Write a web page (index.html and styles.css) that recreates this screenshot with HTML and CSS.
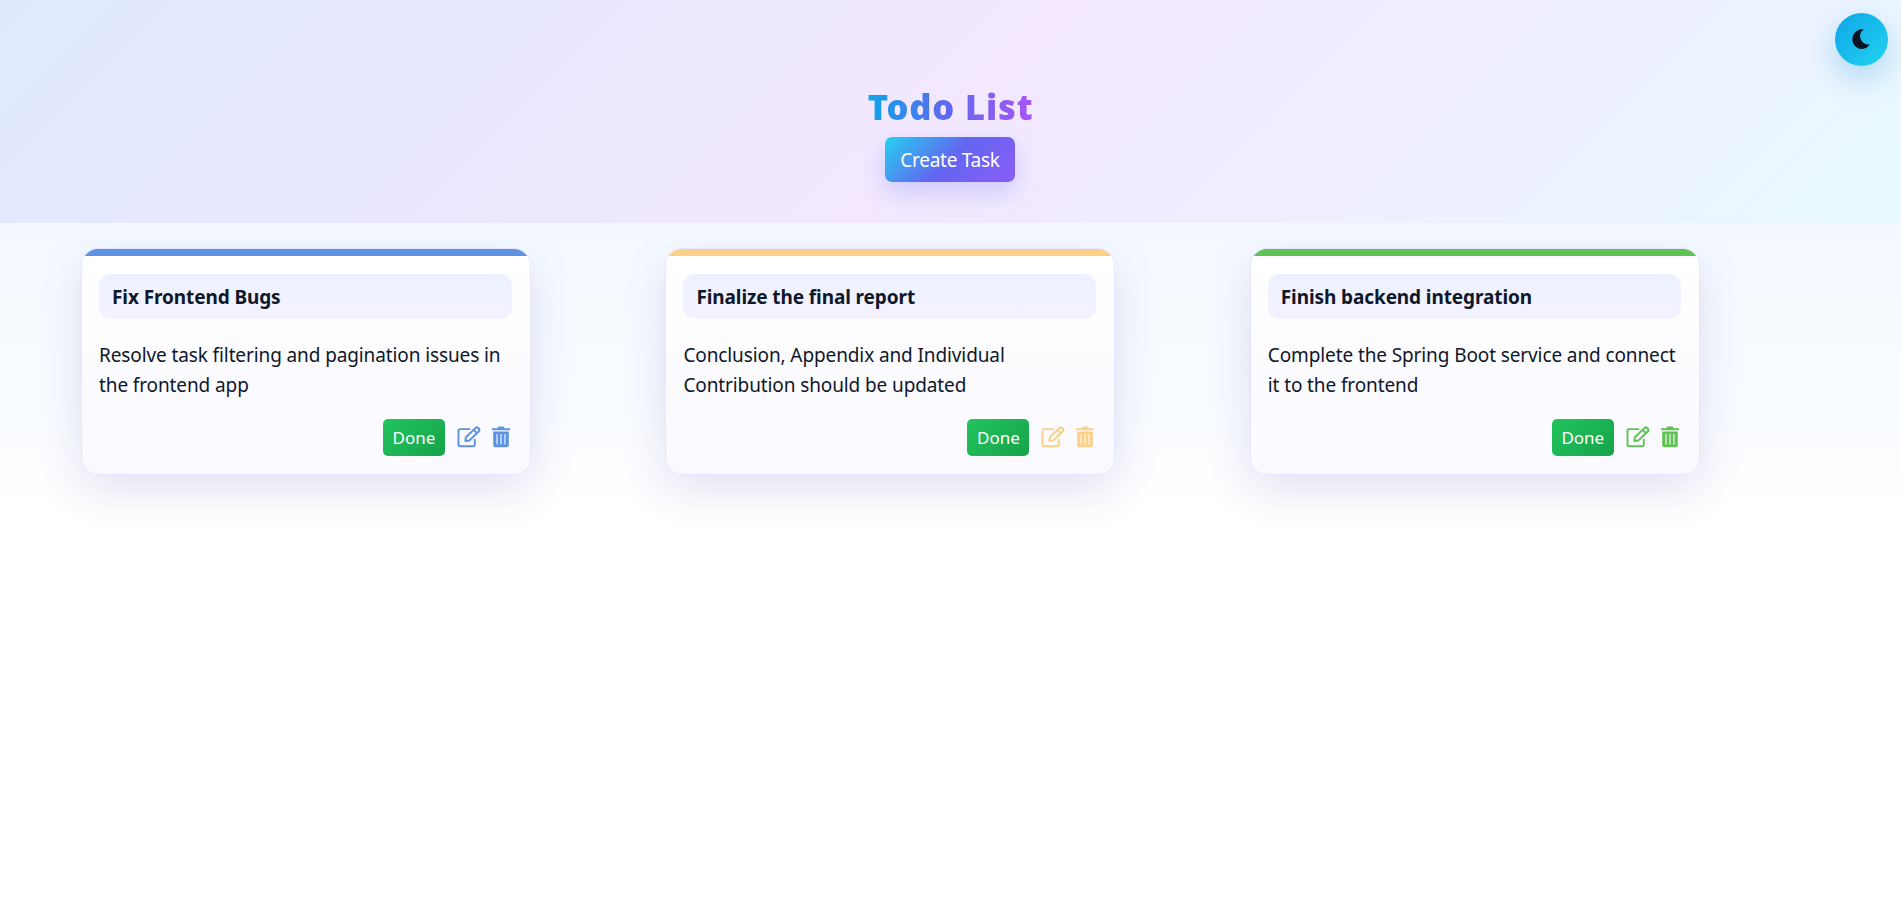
FILE: index.html
```html
<!DOCTYPE html>
<html lang="en">
<head>
<meta charset="utf-8">
<title>Todo List</title>
<link rel="stylesheet" href="styles.css">
</head>
<body>
<svg class="sprite" aria-hidden="true">
  <symbol id="edit" viewBox="0 0 24 22">
    <path d="M13.2 3.1H3.1Q1.5 3.1 1.5 4.7V18.6Q1.5 20.2 3.1 20.2H16.2Q17.8 20.2 17.8 18.6V13" fill="none" stroke="currentColor" stroke-width="1.9"/>
    <path d="M8.4 14.9 8.9 11.2 18.6 1.9Q19.9 .8 21.2 2L21.9 2.7Q23 4 21.9 5.2L12.3 14.6Z M16.6 3.9 19.9 7.1" fill="none" stroke="currentColor" stroke-width="2" stroke-linejoin="round"/>
  </symbol>
  <symbol id="trash" viewBox="0 0 18 22">
    <path d="M0 2.2H5.2L6.4.5H11.6L12.8 2.2H18V4.2H0Z" fill="currentColor"/>
    <path fill-rule="evenodd" d="M1.2 5.4H16.8V19.2Q16.8 21.3 14.7 21.3H3.3Q1.2 21.3 1.2 19.2ZM4.5 8V18.6H5.6V8ZM8.5 8V18.6H9.6V8ZM12.4 8V18.6H13.5V8Z" fill="currentColor"/>
  </symbol>
</svg>
<header class="hero">
  <h1 class="hero-title">Todo List</h1>
  <button class="create">Create Task</button>
  <button class="theme" aria-label="Toggle theme">
    <svg class="moon" viewBox="0 0 18 20"><path d="M11.8.4C9.2 1.8 7.9 4.3 8.1 7.2 8.4 12.2 12.3 15.9 17.8 15.6 16.1 18.3 13.2 19.9 10 19.9 4.6 19.9.4 15.600.4 10.200.4 4.800 4.500.400 9.800.2 10.500.2 11.300.2 11.800.4Z"/></svg>
  </button>
</header>
<main class="board">
  <article class="card blue">
    <h2 class="card-title">Fix Frontend Bugs</h2>
    <p class="card-text">Resolve task filtering and pagination issues in<br>the frontend app</p>
    <div class="actions"><button class="done">Done</button><svg class="edit"><use href="#edit"/></svg><svg class="trash"><use href="#trash"/></svg></div>
  </article>
  <article class="card amber">
    <h2 class="card-title">Finalize the final report</h2>
    <p class="card-text">Conclusion, Appendix and Individual<br>Contribution should be updated</p>
    <div class="actions"><button class="done">Done</button><svg class="edit"><use href="#edit"/></svg><svg class="trash"><use href="#trash"/></svg></div>
  </article>
  <article class="card green">
    <h2 class="card-title">Finish backend integration</h2>
    <p class="card-text">Complete the Spring Boot service and connect<br>it to the frontend</p>
    <div class="actions"><button class="done">Done</button><svg class="edit"><use href="#edit"/></svg><svg class="trash"><use href="#trash"/></svg></div>
  </article>
</main>
</body>
</html>
```
FILE: styles.css
```css
* { box-sizing: border-box; }
body {
  margin: 0;
  min-height: 917px;
  font-family: "Segoe UI", "Noto Sans", sans-serif;
  color: #0f172a;
  background: linear-gradient(180deg, #f5f9ff 223px, #f8fbff 400px, #ffffff 510px);
}
.sprite { display: none; }
button { border: 0; padding: 0; font-family: inherit; color: #fff; }
.hero {
  position: relative;
  height: 223px;
  display: flex;
  flex-direction: column;
  align-items: center;
  padding-top: 83px;
  background: linear-gradient(135deg, #e0eaff 0%, #e6e8fe 20%, #f3e8ff 50%, #ecf2ff 84%, #e8faff 100%);
}
.hero-title {
  margin: 0;
  height: 54px;
  line-height: 48px;
  font-size: 34.5px;
  font-weight: 900;
  letter-spacing: 0.85px;
  color: transparent;
  background: linear-gradient(90deg, #0ea5e9, #6366f1 50%, #a855f7);
  -webkit-background-clip: text;
  background-clip: text;
}
.create {
  width: 130px;
  height: 45px;
  margin-right: 1px;
  border-radius: 7px;
  font-size: 19px;
  letter-spacing: -0.25px;
  white-space: nowrap;
  background: linear-gradient(135deg, #22d3ee, #6366f1 50%, #8b5cf6);
  box-shadow: 0 10px 25px rgba(99, 102, 241, 0.25);
}
.theme {
  position: absolute;
  top: 13px;
  right: 13px;
  width: 53px;
  height: 53px;
  border-radius: 50%;
  display: flex;
  align-items: center;
  justify-content: center;
  background: linear-gradient(135deg, #0ea5e9, #22d3ee);
  box-shadow: 0 12px 30px rgba(14, 140, 210, 0.28);
}
.moon { width: 18px; height: 20px; margin: 0 1px 2px 0; fill: #0b1220; }
.board {
  display: grid;
  grid-template-columns: repeat(3, 450px);
  column-gap: 134.4px;
  padding: 25px 0 0 81px;
}
.card {
  position: relative;
  overflow: hidden;
  height: 227px;
  padding: 25px 18px 16px 17px;
  border: 1px solid #e9e7ff;
  border-radius: 17px;
  background: linear-gradient(180deg, #ffffff, #faf9ff);
  box-shadow: 0 15px 45px rgba(60, 60, 150, 0.14);
}
.card::before {
  content: "";
  position: absolute;
  inset: 0 0 auto;
  height: 7px;
  background: var(--accent);
}
.blue { --accent: #5e93e1; }
.amber { --accent: #fad187; }
.green { --accent: #5ec352; }
.card-title {
  margin: 0;
  height: 45px;
  line-height: 46px;
  padding-left: 13px;
  border-radius: 12px;
  font-size: 19px;
  font-weight: 700;
  letter-spacing: -0.1px;
  background: linear-gradient(180deg, #ecf1ff, #f5f2ff);
}
.card-text {
  margin: 21px 0 19px;
  font-size: 19px;
  line-height: 30px;
  letter-spacing: -0.11px;
  white-space: nowrap;
}
.actions {
  display: flex;
  justify-content: flex-end;
  align-items: flex-start;
  color: var(--accent);
}
.done {
  width: 62px;
  height: 37px;
  border-radius: 5px;
  font-size: 17px;
  background: linear-gradient(135deg, #22c55e, #16a34a);
}
.edit { width: 24px; height: 22px; margin: 7px 0 0 12px; }
.trash { width: 18px; height: 22px; margin: 7px 2px 0 11px; }
```
